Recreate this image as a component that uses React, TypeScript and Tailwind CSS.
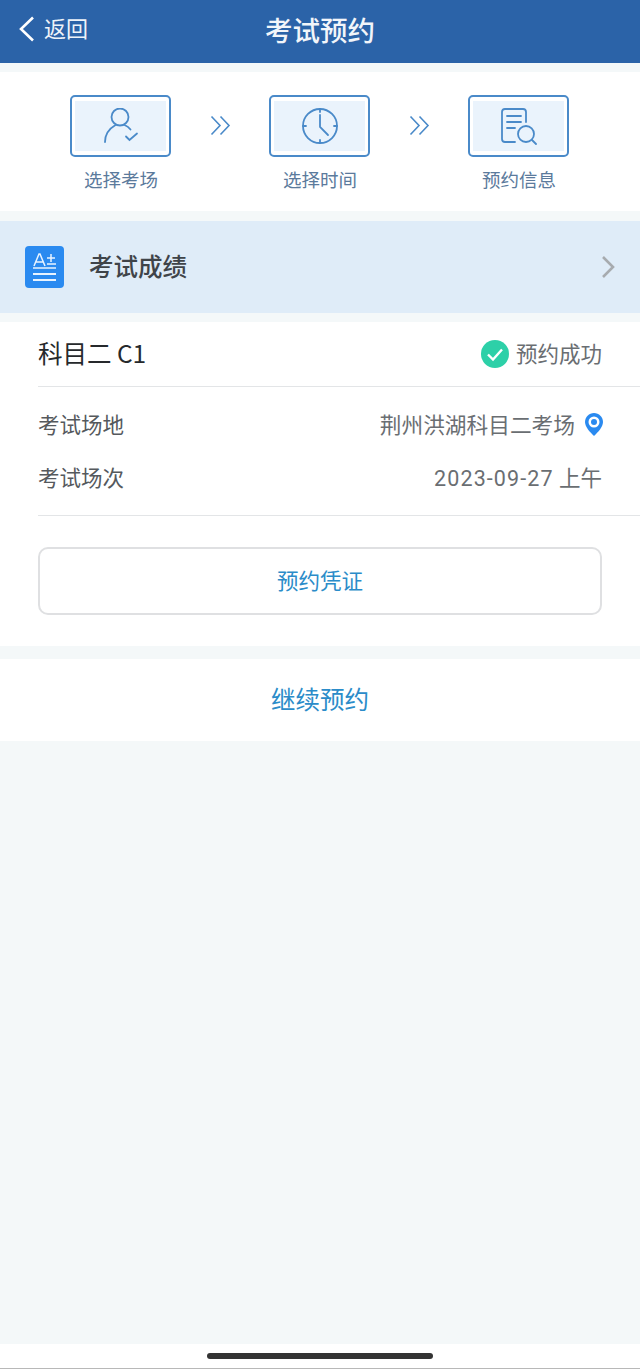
const font = '"Noto Sans CJK SC", "Liberation Sans", sans-serif';

function StepBox({ children, label }: { children: React.ReactNode; label: string }) {
	return (
		<div className="flex w-[102px] flex-col items-center">
			<div className="mr-[1px] h-[62px] w-[101px] rounded-[5px] border-2 border-[#4a8ac9] bg-white px-[3px] py-[4px]">
				<div className="flex h-full w-full items-center justify-center bg-[#eaf3fc]">{children}</div>
			</div>
			<span className="mt-[10px] text-[18.5px] leading-[24px] text-[#5b7a9c]">{label}</span>
		</div>
	);
}

function Arrows() {
	return (
		<svg width="21" height="21" viewBox="0 0 21 21" fill="none" stroke="#4a8ac9" strokeWidth="1.6" className="ml-[38px] mr-[38px] mt-[20px]">
			<path d="M1.5 1.5 L10 10.5 L1.5 19.5" />
			<path d="M10.5 1.5 L19 10.5 L10.5 19.5" />
		</svg>
	);
}

export default function App() {
	return (
		<div className="flex h-[1369px] w-[640px] flex-col bg-[#f4f8f9]" style={{ fontFamily: font }}>
			<header className="relative flex h-[63px] items-center justify-center bg-[#2b63a8] text-white">
				<div className="absolute left-[19px] top-[13px] flex items-center">
					<svg width="16" height="26" viewBox="0 0 16 26" fill="none" stroke="#fff" strokeWidth="2.6">
						<path d="M14 1.5 L2 13 L14 24.5" />
					</svg>
					<span className="mb-[4px] ml-[9px] text-[22px] leading-[28px] text-[#eef3f9]">返回</span>
				</div>
				<h1 className="mb-[6px] text-[27.5px] font-medium leading-[36px] text-[#f2f5fa]">考试预约</h1>
			</header>

			<section className="mt-[9px] flex h-[139px] items-start justify-center bg-white pt-[23px]">
				<div className="flex items-start">
					<StepBox label="选择考场">
						<svg width="36" height="36" viewBox="0 0 36 36" fill="none" stroke="#4a8ac9" strokeWidth="1.8" strokeLinecap="round">
							<circle cx="17" cy="9" r="8.5" />
							<path d="M2 34 C2 26.5 6.5 20.5 12.5 17" />
							<path d="M21.5 17 C24 18 26 19.5 27.5 21.5" />
							<path d="M23 28.5 L26.5 32 L34 25.5" />
						</svg>
					</StepBox>
					<Arrows />
					<StepBox label="选择时间">
						<svg width="38" height="38" viewBox="0 0 38 38" fill="none" stroke="#4a8ac9" strokeWidth="1.8" strokeLinecap="round">
							<circle cx="19" cy="19" r="17" />
							<path d="M19 8 L19 20 L27 28" />
							<path d="M19 2 L19 5 M2 19 L5 19 M33 19 L36 19 M19 33 L19 36" />
						</svg>
					</StepBox>
					<Arrows />
					<StepBox label="预约信息">
						<svg width="38" height="38" viewBox="0 0 38 38" fill="none" stroke="#4a8ac9" strokeWidth="1.8" strokeLinecap="round">
							<path d="M15 35 L5 35 Q2 35 2 32 L2 5 Q2 2 5 2 L23 2 Q26 2 26 5 L26 15" />
							<path d="M7 9 L21 9 M7 15 L21 15 M7 21 L15 21" />
							<circle cx="26" cy="27" r="8" />
							<path d="M32 33 L36 37" />
						</svg>
					</StepBox>
				</div>
			</section>

			<section className="mt-[10px] flex h-[92px] items-center bg-[#dfecf8] px-[25px]">
				<div className="flex h-[42px] w-[39px] flex-col items-center justify-center rounded-[4px] bg-[#2a8af0] px-[8px]">
					<svg width="23" height="30" viewBox="0 0 23 30" fill="none" stroke="#e8f3ff" strokeWidth="1.5">
						<path d="M1 14 L6 2 L7 2 L12 14 M3 10 L10 10" />
						<path d="M14 6 L22 6 M18 2 L18 10 M14 12 L23 12" />
						<path d="M0 16 L23 16" />
						<path d="M0 22 L23 22 M0 28 L23 28" strokeWidth="2" />
					</svg>
				</div>
				<span className="mb-[3px] ml-[25px] text-[24.5px] font-medium leading-[32px] text-[#3f4449]">考试成绩</span>
				<svg width="14" height="24" viewBox="0 0 14 24" fill="none" stroke="#a7abaf" strokeWidth="2.6" className="ml-auto">
					<path d="M2 2 L12 12 L2 22" />
				</svg>
			</section>

			<section className="mt-[9px] flex h-[324px] flex-col bg-white pl-[38px]">
				<div className="flex h-[65px] items-center justify-between border-b border-[#e3e5e7] pr-[38px]">
					<span className="mb-[2px] text-[24.5px] leading-[34px] text-[#26292c]">科目二 C1</span>
					<div className="flex items-center">
						<svg width="28" height="28" viewBox="0 0 28 28">
							<circle cx="14" cy="14" r="14" fill="#2dd0a8" />
							<path d="M7 14.5 L12 19.5 L21 9.5" fill="none" stroke="#fff" strokeWidth="2.4" />
						</svg>
						<span className="mb-[2px] ml-[7px] text-[21.5px] leading-[28px] text-[#6a6e72]">预约成功</span>
					</div>
				</div>

				<div className="flex h-[129px] flex-col border-b border-[#e3e5e7] pr-[38px] pt-[21px]">
					<div className="flex h-[32px] items-center justify-between">
						<span className="text-[21.5px] leading-[28px] text-[#55595d]">考试场地</span>
						<div className="flex items-center">
							<span className="text-[21.7px] leading-[28px] text-[#6a6e72]">荆州洪湖科目二考场</span>
							<svg width="18" height="23" viewBox="0 0 18 23" className="-mr-[1px] ml-[10px]">
								<path d="M9 0 C4 0 0 4 0 9 C0 14 5 19 9 23 C13 19 18 14 18 9 C18 4 14 0 9 0 Z" fill="#2a8af0" />
								<circle cx="9" cy="9" r="5.5" fill="#fff" />
								<circle cx="9" cy="9" r="3" fill="#2a8af0" />
							</svg>
						</div>
					</div>
					<div className="mt-[21px] flex h-[32px] items-center justify-between">
						<span className="text-[21.5px] leading-[28px] text-[#55595d]">考试场次</span>
						<span className="pt-[4px] text-[21.5px] leading-[28px] text-[#6a6e72]" style={{ fontFamily: '"Roboto", "Noto Sans CJK SC", sans-serif' }}>
							<span className="tracking-[1.1px]">2023-09-27</span> 上午
						</span>
					</div>
				</div>

				<div className="mt-[31px] pr-[38px]">
					<div className="flex h-[68px] items-center justify-center rounded-[10px] border-2 border-[#dfe0e2] bg-white">
						<span className="mb-[2px] text-[21.5px] leading-[28px] text-[#2b8cc9]">预约凭证</span>
					</div>
				</div>
			</section>

			<section className="mt-[13px] flex h-[82px] items-center justify-center bg-white">
				<span className="mb-[2px] text-[24.5px] leading-[32px] text-[#2b8cc9]">继续预约</span>
			</section>

			<div className="flex-1" />

			<footer className="flex h-[25px] items-start justify-center border-b border-[#b8b8b8] bg-white pt-[9px]">
				<div className="h-[6px] w-[226px] rounded-full bg-[#333333]" />
			</footer>
		</div>
	);
}
